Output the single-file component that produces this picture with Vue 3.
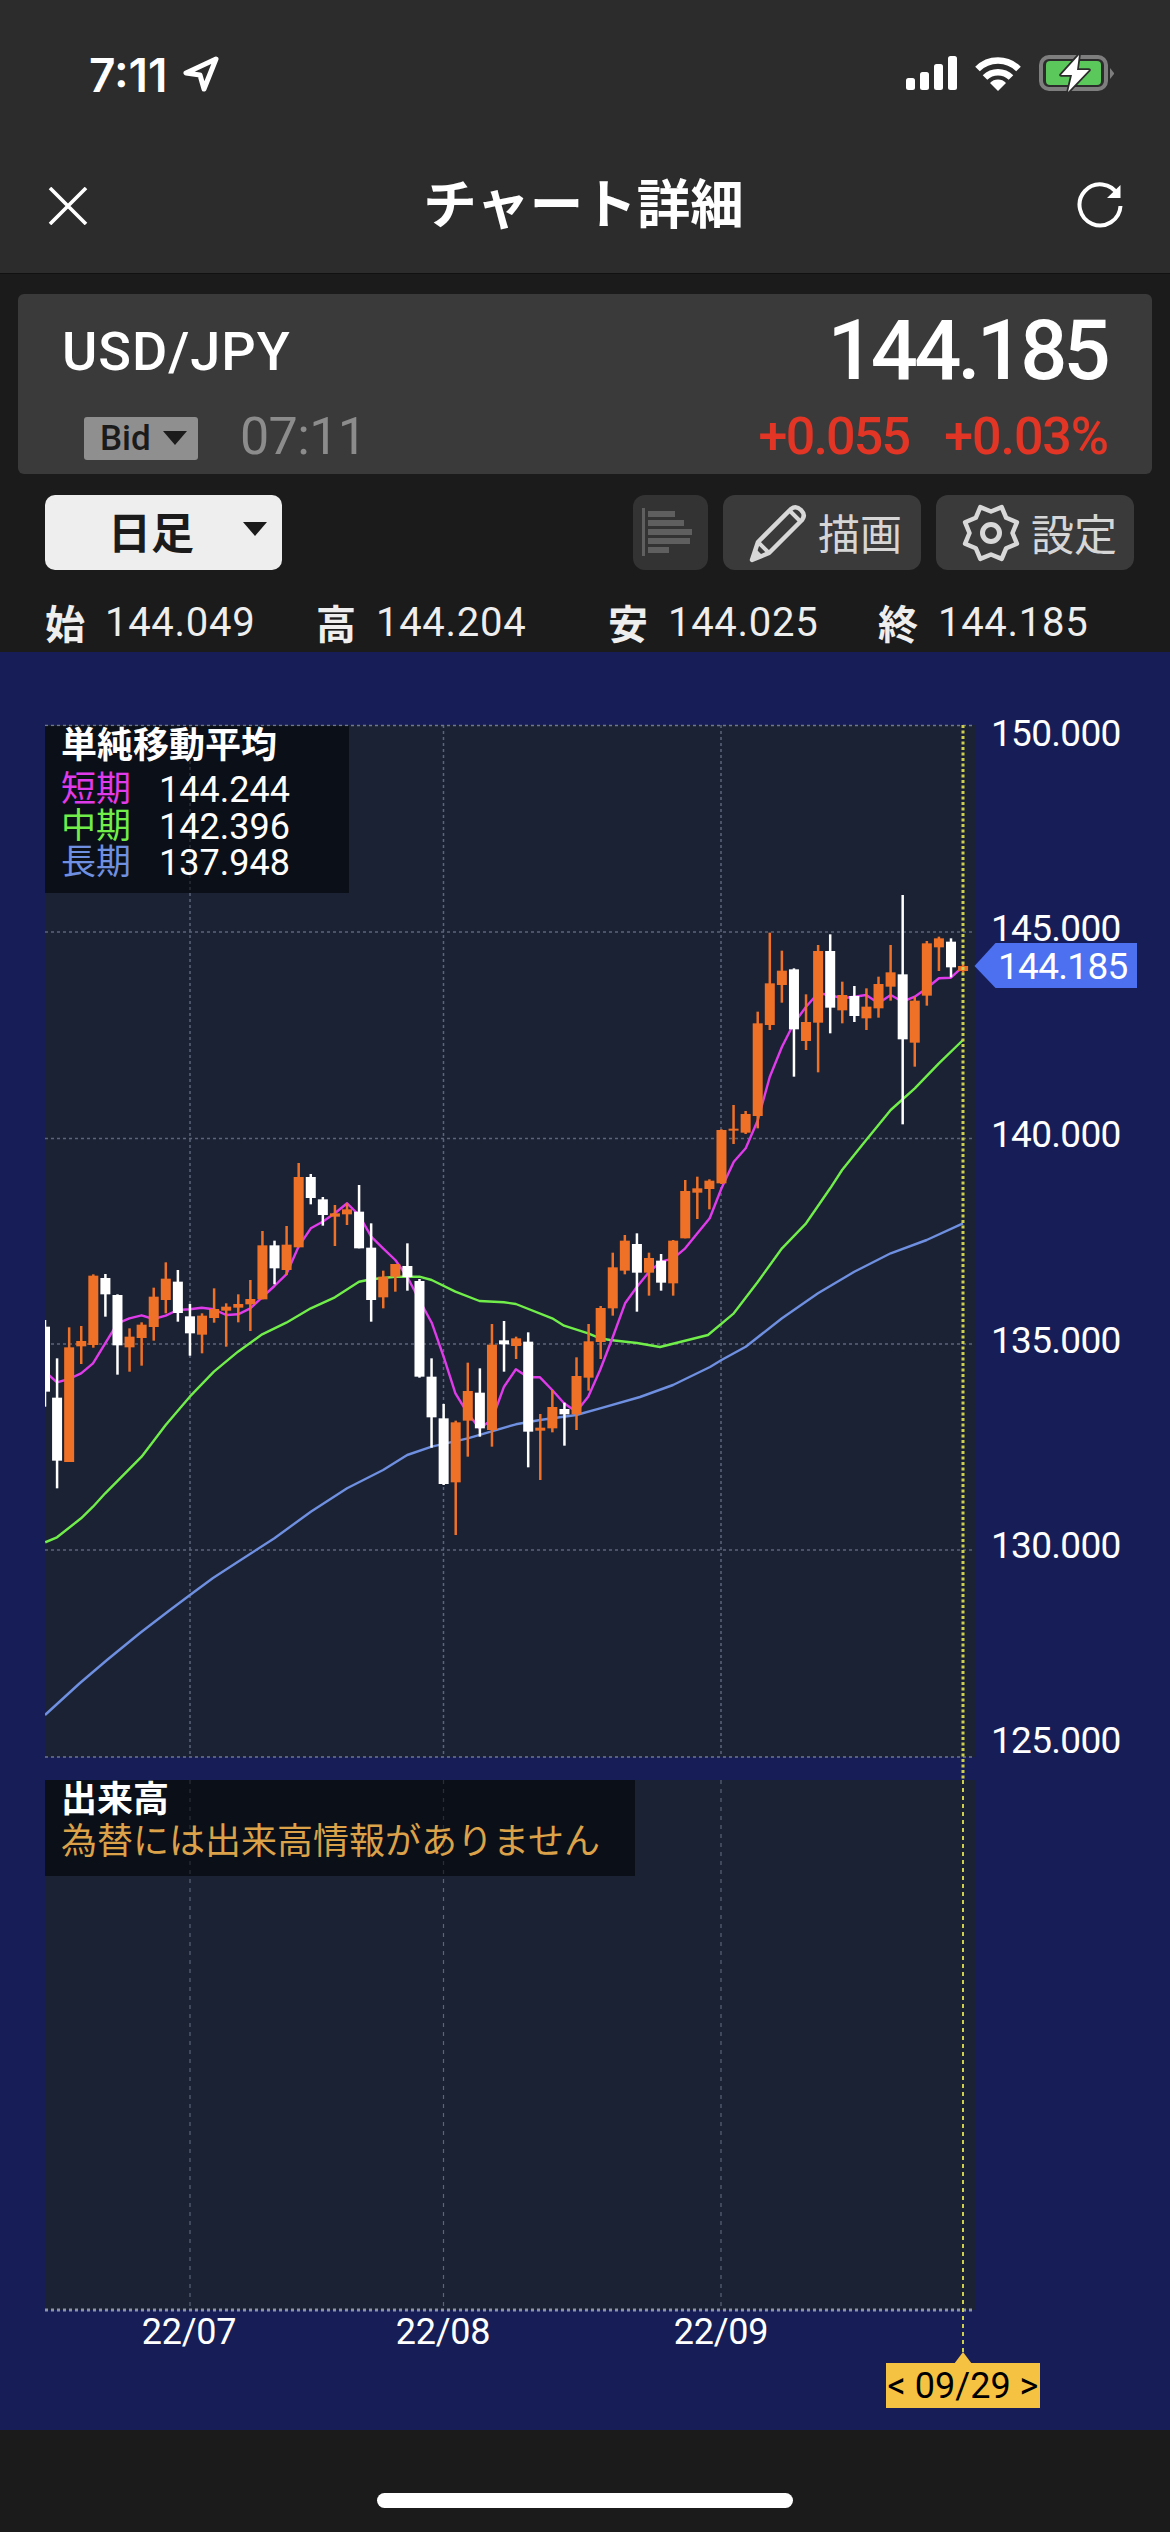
<script setup>
const candlesA = [
  ['w',420,440,635,680],['w',535,653,842,925],['o',442,502,846,846],['o',438,483,499,552],['o',283,287,495,503],
  ['w',282,294,343,410],['w',343,345,496,584],['o',445,470,502,575],['o',427,434,474,557],['o',323,350,441,482],
  ['o',247,296,360,400],['w',270,305,399,425],['w',372,409,460,527],['o',400,407,464,520],['o',325,387,414,428],
  ['o',370,380,392,500],['o',343,372,383,427],['o',300,357,373,453],['o',153,196,358,358],['w',182,196,265,313],
  ['o',138,194,270,285],['o',-51,-9,202,202],['w',-18,-9,54,73],['w',51,58,105,137],['o',75,100,110,198],
  ['o',70,88,103,135],['w',15,95,205,205],['w',130,203,360,425],['o',272,290,352,385],['o',252,252,290,335],
  ['w',190,258,291,332],['w',297,303,590,593],['w',535,590,712,803],['w',672,715,912,915],['o',722,727,907,1065],
  ['o',548,633,722,830],['w',565,638,745,770],['o',432,494,750,800],['w',423,481,493,575],['o',470,475,498,537],
  ['w',457,485,755,862],['o',702,743,752,900],['o',630,681,745,757],['w',668,687,703,797],['o',532,588,703,750],
  ['o',432,484,593,632],['o',378,384,486,537]
]
const candlesB = [
  ['o',1178,1222,1345,1367],['o',1125,1142,1232,1243],['w',1120,1152,1238,1355],['o',1178,1194,1238,1307],
  ['w',1182,1202,1268,1292],['o',1140,1142,1270,1307],['o',960,993,1135,1135],['o',950,985,998,1077],
  ['o',958,962,987,1048],['o',808,810,970,972],['o',735,806,812,852],['o',753,762,818,822],['o',455,490,768,805],
  ['o',218,370,495,510],['o',272,332,375,428],['w',325,328,508,650],['o',403,486,543,570],['o',255,273,488,637],
  ['w',223,273,443,520],['o',365,405,451,490],['w',378,408,468,486],['o',385,440,475,510],['o',350,372,445,473],
  ['o',255,337,380,422],['w',105,343,538,793],['o',410,422,548,620],['o',243,250,407,437],['o',230,235,262,333],
  ['w',235,245,322,352],['o',312,318,333,338]
]
const toCandle = (d, i, base) => {
  const x = 45 + 12.08 * i
  const y = (v) => base + v / 3
  return {
    key: i, x, color: d[0] === 'w' ? '#ffffff' : '#ef7127',
    wy: y(d[1]), wh: y(d[4]) - y(d[1]), by: y(d[2]), bh: y(d[3]) - y(d[2])
  }
}
const candles = [
  ...candlesA.map((d, i) => toCandle(d, i, 1180)),
  ...candlesB.map((d, i) => toCandle(d, i + 47, 860))
]

const z4 = (pts) => pts.map(([x, y]) => [x / 2.613, 1180 + y / 3])
const z3 = (pts) => pts.map(([x, y]) => [570 + x / 2.613, 860 + y / 3])
const poly = (pts) => pts.map(([x, y]) => `${x.toFixed(1)},${y.toFixed(1)}`).join(' ')

const magenta = poly([
  ...z4([[118,575],[149,607],[180,597],[212,580],[243,550],[275,490],[307,430],[338,415],[370,406],[401,417],[433,407],[464,390],[496,388],[527,383],[559,388],[591,405],[622,403],[654,385],[685,352],[717,318],[748,283],[780,200],[812,145],[843,125],[875,100],[907,70],[938,105],[970,170],[1001,205],[1033,240],[1064,290],[1096,360],[1128,428],[1159,530],[1190,640],[1222,700],[1253,745],[1285,720],[1317,620],[1348,568],[1380,592],[1411,592],[1443,630],[1474,670],[1506,695],[1537,650],[1568,570]]),
  ...z3([[112,1430],[144,1330],[175,1280],[207,1235],[238,1205],[270,1195],[301,1165],[333,1120],[365,1075],[396,985],[428,905],[459,865],[491,780],[522,650],[554,560],[585,490],[617,440],[648,400],[680,405],[711,415],[743,410],[774,405],[806,430],[838,405],[869,425],[901,410],[932,385],[964,355],[995,353],[1027,320]])
])
const green = poly([
  ...z4([[118,1087],[149,1072],[212,1015],[243,980],[275,940],[370,830],[433,735],[496,650],[559,575],[622,515],[685,463],[748,428],[812,385],[875,352],[938,305],[970,298],[1033,290],[1096,290],[1128,300],[1190,335],[1253,363],[1317,367],[1348,372],[1443,415],[1474,437],[1537,460],[1568,475]]),
  [610,1340],[637,1343],[660,1347],[708,1335],
  ...z3([[428,1360],[491,1265],[554,1165],[617,1090],[680,985],[711,930],[774,840],[838,750],[901,685],[964,610],[1027,540]])
])
const blue = poly([
  [45,1715],[80,1683],[107,1660],[140,1633],[170,1610],[190,1595],[213,1578],
  ...z4([[622,1145],[717,1075],[812,995],[907,925],[1001,870],[1064,825],[1128,800],[1222,775],[1348,733],[1411,720],[1506,705],[1568,685]]),
  [640,1397],[673,1385],[710,1367],
  ...z3([[396,1500],[459,1460],[554,1375],[648,1300],[743,1235],[838,1180],[932,1140],[1027,1090]])
])

const hGrid = [932, 1138.5, 1344, 1550]
const vGrid = [190, 443.5, 721]
const yLabels = [
  { t: '150.000', y: 746 }, { t: '145.000', y: 941 }, { t: '140.000', y: 1147 },
  { t: '135.000', y: 1353 }, { t: '130.000', y: 1558 }, { t: '125.000', y: 1753 }
]
const xLabels = [
  { t: '22/07', x: 189 }, { t: '22/08', x: 443 }, { t: '22/09', x: 721 }
]
const ma = [
  { name: '短期', value: '144.244', cls: 'c-short' },
  { name: '中期', value: '142.396', cls: 'c-mid' },
  { name: '長期', value: '137.948', cls: 'c-long' }
]
const ohlc = [
  { k: '始', v: '144.049' }, { k: '高', v: '144.204' }, { k: '安', v: '144.025' }, { k: '終', v: '144.185' }
]
const gearPts = (() => {
  const out = []
  for (let i = 0; i < 16; i++) {
    const r = i % 2 === 0 ? 28 : 21.5
    const a = (Math.PI * 2 * i) / 16 + Math.PI / 8
    out.push(`${(30 + r * Math.sin(a)).toFixed(1)},${(30 - r * Math.cos(a)).toFixed(1)}`)
  }
  return out.join(' ')
})()
</script>

<template>
  <div class="screen">
    <header class="top">
      <div class="status">
        <span class="clock">7:11</span>
        <svg class="loc" width="36" height="36" viewBox="0 0 36 36">
          <path d="M33 3 L3 17 L17 19 L21 33 Z" fill="none" stroke="#fff" stroke-width="5" stroke-linejoin="round" />
        </svg>
        <div class="status-right">
          <svg width="52" height="36" viewBox="0 0 52 36">
            <rect x="0" y="22" width="9" height="12" rx="2.5" fill="#fff" />
            <rect x="14" y="16" width="9" height="18" rx="2.5" fill="#fff" />
            <rect x="28" y="8" width="9" height="26" rx="2.5" fill="#fff" />
            <rect x="42" y="0" width="9" height="34" rx="2.5" fill="#fff" />
          </svg>
          <svg width="48" height="36" viewBox="0 0 48 36">
            <path d="M3.5 13 A29 29 0 0 1 44.5 13" fill="none" stroke="#fff" stroke-width="6.5" />
            <path d="M11 21.5 A18.5 18.5 0 0 1 37 21.5" fill="none" stroke="#fff" stroke-width="6.5" />
            <path d="M24 35 L16 27 A11 11 0 0 1 32 27 Z" fill="#fff" />
          </svg>
          <svg class="batt" width="76" height="40" viewBox="0 0 76 40">
            <rect x="2" y="4" width="65" height="32" rx="8" fill="none" stroke="#7e7e7e" stroke-width="4" />
            <rect x="7" y="8" width="55" height="24" rx="4" fill="#5ac85a" />
            <path d="M71 15 L75 20 L75 21 L71 26 Z" fill="#7e7e7e" />
            <path d="M40 2 L22 22 L33 22 L29 39 L50 17 L38 17 Z" fill="#fff" stroke="#2c2c2c" stroke-width="3.5" stroke-linejoin="round" paint-order="stroke" />
          </svg>
        </div>
      </div>
      <div class="nav">
        <svg width="40" height="38" viewBox="0 0 40 38">
          <path d="M2 1 L38 37 M38 1 L2 37" stroke="#fff" stroke-width="3.6" fill="none" />
        </svg>
        <div class="title">チャート詳細</div>
        <svg width="48" height="48" viewBox="0 0 48 48">
          <path d="M42 13 A20.5 20.5 0 1 0 44.5 24" fill="none" stroke="#fff" stroke-width="4" />
          <path d="M44.5 3 L44.5 16 L31 16 Z" fill="#fff" />
        </svg>
      </div>
    </header>

    <section class="panel">
      <div class="panel-row first">
        <span class="pair">USD/JPY</span>
        <span class="price">144.185</span>
      </div>
      <div class="panel-row second">
        <span class="bid">Bid<i class="tri small"></i></span>
        <span class="time">07:11</span>
        <span class="chg">+0.055</span>
        <span class="chg pct">+0.03%</span>
      </div>
    </section>

    <div class="toolbar">
      <div class="dropdown"><span class="dd-label">日足</span><i class="tri"></i></div>
      <div class="btn icon-only">
        <svg width="50" height="50" viewBox="0 0 50 50">
          <rect x="0" y="0" width="3" height="48" fill="#5f5f5f" />
          <rect x="6" y="3" width="27" height="6" fill="#5f5f5f" />
          <rect x="6" y="12" width="36" height="6" fill="#5f5f5f" />
          <rect x="6" y="21" width="51" height="6" fill="#5f5f5f" />
          <rect x="6" y="30" width="42" height="6" fill="#5f5f5f" />
          <rect x="6" y="39" width="21" height="6" fill="#5f5f5f" />
        </svg>
      </div>
      <div class="btn">
        <svg width="60" height="60" viewBox="0 0 60 60">
          <path d="M4 57 L10 39 L43 6 Q48 2 53 7 Q58 12 54 17 L21 50 Z" fill="none" stroke="#d8d8d8" stroke-width="4.5" stroke-linejoin="round" />
          <path d="M10 39 L21 50 M42 8 L52 18" fill="none" stroke="#d8d8d8" stroke-width="4" />
          <path d="M4 57 L8 46 L15 53 Z" fill="#d8d8d8" />
        </svg>
        <span class="btn-label">描画</span>
      </div>
      <div class="btn">
        <svg width="60" height="60" viewBox="0 0 60 60">
          <polygon :points="gearPts" fill="none" stroke="#d8d8d8" stroke-width="4.5" stroke-linejoin="round" />
          <circle cx="30" cy="30" r="8.5" fill="none" stroke="#d8d8d8" stroke-width="5" />
        </svg>
        <span class="btn-label wide">設定</span>
      </div>
    </div>

    <div class="ohlc">
      <div v-for="o in ohlc" :key="o.k" class="ohlc-item">
        <b>{{ o.k }}</b><span>{{ o.v }}</span>
      </div>
    </div>

    <main class="chart">
      <svg class="plot" width="1170" height="1778" viewBox="0 652 1170 1778">
        <defs>
          <clipPath id="main-clip"><rect x="45" y="725" width="930" height="1032" /></clipPath>
        </defs>
        <rect x="45" y="725" width="930" height="1032" fill="#1a2234" />
        <rect x="45" y="1780" width="930" height="530" fill="#1a2234" />

        <line v-for="y in hGrid" :key="y" x1="45" x2="975" :y1="y" :y2="y" class="grid" />
        <g v-for="x in vGrid" :key="x">
          <line :x1="x" :x2="x" y1="725" y2="1757" class="grid" />
          <line :x1="x" :x2="x" y1="1780" y2="2310" class="grid thin" />
        </g>
        <line x1="45" x2="975" y1="725.5" y2="725.5" class="edge" />
        <line x1="45" x2="975" y1="1757" y2="1757" class="edge" />
        <line x1="45" x2="975" y1="2310" y2="2310" class="edge strong" />

        <g clip-path="url(#main-clip)">
          <polyline :points="blue" class="ma" stroke="#6f8fe0" />
          <polyline :points="green" class="ma" stroke="#71ee4a" />
          <polyline :points="magenta" class="ma" stroke="#e03bea" />
          <g v-for="c in candles" :key="c.key">
            <rect :x="c.x - 1.25" :y="c.wy" width="2.5" :height="c.wh" :fill="c.color" />
            <rect :x="c.x - 5" :y="c.by" width="10" :height="c.bh" :fill="c.color" />
          </g>
        </g>

        <line x1="963" x2="963" y1="725" y2="1780" class="cursor" />
        <line x1="963" x2="963" y1="1780" y2="2352" class="cursor thin" />

        <text v-for="l in yLabels" :key="l.t" x="991" :y="l.y" class="axis">{{ l.t }}</text>
        <text v-for="l in xLabels" :key="l.t" :x="l.x" y="2344" text-anchor="middle" class="axis date">{{ l.t }}</text>

        <polygon points="974.5,966 995.5,943 1137,943 1137,988 995.5,988" fill="#4c70ef" />
        <text x="998" y="979" class="axis">144.185</text>

        <polygon points="963,2352 954,2364 972,2364" fill="#f5c242" />
        <rect x="886" y="2363" width="154" height="45" fill="#f5c242" />
        <text x="963" y="2398" text-anchor="middle" class="axis tag">&lt; 09/29 &gt;</text>
      </svg>

      <div class="legend sma">
        <div class="legend-title">単純移動平均</div>
        <div v-for="m in ma" :key="m.name" class="legend-row">
          <span :class="m.cls">{{ m.name }}</span><span class="legend-val">{{ m.value }}</span>
        </div>
      </div>
      <div class="legend vol">
        <div class="legend-title">出来高</div>
        <div class="vol-msg">為替には出来高情報がありません</div>
      </div>
    </main>

    <footer class="home"><div class="home-bar"></div></footer>
  </div>
</template>

<style>
html, body { margin: 0; background: #1b1b1b; }
</style>

<style scoped>
.screen {
  width: 1170px;
  height: 2532px;
  background: #1b1b1b;
  overflow: hidden;
  font-family: Roboto, "Noto Sans CJK JP", sans-serif;
  color: #fff;
}
.top {
  height: 273px;
  background: #2c2c2c;
  border-bottom: 1px solid #111;
}
.status {
  height: 138px;
  box-sizing: border-box;
  padding: 56px 55px 0 89px;
  display: flex;
  align-items: flex-start;
}
.clock {
  font-family: Inter, sans-serif;
  font-weight: 600;
  font-size: 46px;
  line-height: 38px;
  letter-spacing: 0;
}
.loc { margin-left: 15px; margin-top: 0; }
.status-right {
  margin-left: auto;
  display: flex;
  align-items: flex-start;
  gap: 16px;
}
.batt { margin-top: -3px; margin-left: 1px; }
.nav {
  height: 135px;
  padding: 0 46px 0 48px;
  display: flex;
  align-items: center;
  justify-content: space-between;
}
.title {
  font-size: 53.5px;
  font-weight: 700;
  line-height: 60px;
  margin-left: 3px;
}
.panel {
  margin: 20px 18px 0;
  height: 180px;
  background: #3a3a3a;
  border-radius: 6px;
  box-sizing: border-box;
}
.panel-row { display: flex; align-items: center; }
.panel-row.first {
  height: 114px;
  padding: 0 45px 0 44px;
  justify-content: space-between;
}
.pair { font-size: 54px; font-weight: 500; letter-spacing: 1px; }
.price {
  font-size: 83px;
  font-weight: 500;
  letter-spacing: -3.8px;
  line-height: 90px;
}
.panel-row.second { height: 66px; padding: 0 44px 0 66px; }
.bid {
  width: 114px;
  height: 43px;
  box-sizing: border-box;
  padding-left: 16px;
  display: flex;
  align-items: center;
  gap: 12px;
  background: #8f8f8f;
  border-radius: 3px;
  color: #1b1b1b;
  font-size: 35px;
  font-weight: 500;
  margin-top: -6px;
}
.tri {
  display: block;
  width: 0;
  height: 0;
  border-left: 12px solid transparent;
  border-right: 12px solid transparent;
  border-top: 14px solid #1b1b1b;
}
.time {
  margin-left: 42px;
  font-size: 52px;
  color: #8c8c8c;
  letter-spacing: -0.6px;
  margin-top: -10px;
}
.chg {
  font-size: 52px;
  font-weight: 500;
  color: #e33525;
  letter-spacing: -1.8px;
  margin-left: auto;
  margin-top: -10px;
}
.chg.pct { margin-left: 35px; letter-spacing: -1.1px; }
.toolbar {
  margin-top: 21px;
  height: 75px;
  padding: 0 36px 0 45px;
  display: flex;
  gap: 15px;
}
.dropdown {
  width: 237px;
  margin-right: auto;
  box-sizing: border-box;
  padding: 0 15px 0 63px;
  display: flex;
  align-items: center;
  justify-content: space-between;
  background: #eee;
  border-radius: 10px;
  color: #1b1b1b;
  font-size: 43px;
  font-weight: 700;
}
.dd-label { margin-top: -6px; }
.dropdown .tri { margin-top: -8px; }
.btn {
  width: 198px;
  display: flex;
  align-items: center;
  gap: 10px;
  box-sizing: border-box;
  padding-left: 25px;
  background: #3a3a3a;
  border-radius: 12px;
  color: #d6d6d6;
  font-size: 42px;
  font-weight: 400;
}
.btn-label { margin-top: -2px; }
.btn-label.wide { font-size: 43px; }
.btn.icon-only { width: 75px; padding-left: 9px; background: #333; overflow: hidden; }
.ohlc {
  height: 82px;
  box-sizing: border-box;
  padding: 22px 0 0 45px;
  display: grid;
  grid-template-columns: 271px 292px 270px auto;
  align-items: center;
}
.ohlc-item { display: flex; align-items: center; gap: 20px; font-size: 40px; color: #eee; }
.ohlc-item span { letter-spacing: 0.7px; }
.ohlc-item b { font-weight: 700; }
.chart {
  position: relative;
  height: 1778px;
  background: #171e57;
}
.plot { display: block; }
.grid { stroke: #5b6478; stroke-width: 1.5; stroke-dasharray: 3 3; }
.grid.thin { stroke-width: 1.2; stroke-dasharray: 4 5; }
.edge { stroke: #6e7790; stroke-width: 1.5; stroke-dasharray: 3 3; }
.edge.strong { stroke: #8e94a8; stroke-width: 3; }
.ma { fill: none; stroke-width: 2.4; stroke-linejoin: round; }
.cursor { stroke: #cdd04e; stroke-width: 3; stroke-dasharray: 3 2.5; }
.cursor.thin { stroke-width: 2; stroke-dasharray: 4 4; }
.axis { font-size: 37px; fill: #fff; letter-spacing: -0.7px; }
.axis.date { font-size: 36px; letter-spacing: -0.3px; }
.axis.tag { font-size: 36px; fill: #000; letter-spacing: 0; }
.legend {
  position: absolute;
  left: 45px;
  background: rgba(0, 0, 0, 0.55);
  box-sizing: border-box;
  padding-left: 16px;
}
.legend.sma { top: 74px; width: 304px; height: 167px; }
.legend.vol { top: 1128px; width: 590px; height: 96px; }
.legend-title { font-size: 36px; font-weight: 700; line-height: 40px; }
.legend-row { display: flex; align-items: center; height: 36.5px; line-height: 36px; font-size: 35px; }
.legend-title + .legend-row { margin-top: 6px; }
.legend-val { margin-left: 28px; font-size: 36px; letter-spacing: 0; }
.c-short { color: #e03bea; }
.c-mid { color: #71ee4a; }
.c-long { color: #6f8fe0; }
.vol-msg { font-size: 36px; color: #dba24a; line-height: 44px; }
.home {
  height: 102px;
  display: flex;
  justify-content: center;
  box-sizing: border-box;
  padding-top: 63px;
}
.home-bar { width: 416px; height: 15px; border-radius: 8px; background: #fff; }
</style>
